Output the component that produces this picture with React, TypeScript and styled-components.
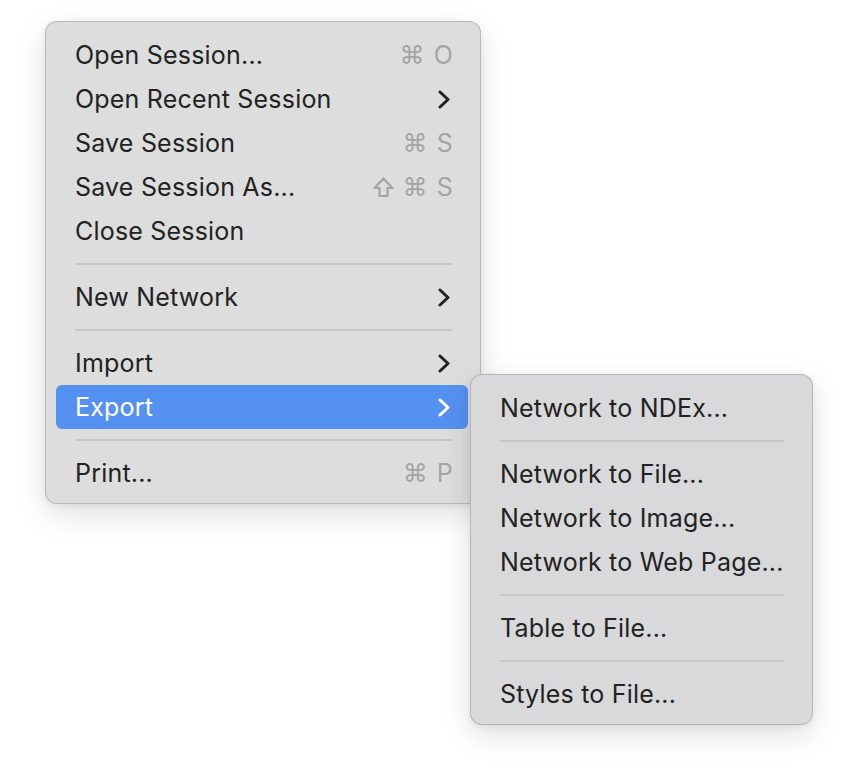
import React from "react";
import styled, { createGlobalStyle } from "styled-components";

const GlobalStyle = createGlobalStyle`
  html, body { margin: 0; padding: 0; background: #ffffff; }
  body { font-family: Inter, "Noto Sans", "DejaVu Sans", sans-serif; -webkit-font-smoothing: antialiased; }
`;

const Page = styled.div`
  padding: 21px 0 0 45px;
  min-height: 770px;
  box-sizing: border-box;
`;

const Menu = styled.div<{ $width: number; $bg: string }>`
  position: relative;
  box-sizing: border-box;
  width: ${(p) => p.$width}px;
  display: flex;
  flex-direction: column;
  padding: 11px 12px 8px 10px;
  background: ${(p) => p.$bg};
  border: 1px solid rgba(0, 0, 0, 0.16);
  border-radius: 12px;
  box-shadow: 0 10px 30px rgba(0, 0, 0, 0.13), 0 2px 6px rgba(0, 0, 0, 0.06);
`;

const Item = styled.div<{ $active?: boolean }>`
  position: relative;
  height: 44px;
  display: flex;
  align-items: center;
  padding: 0 15px 0 19px;
  border-radius: 6px;
  font-size: 25px;
  letter-spacing: 0.2px;
  color: ${(p) => (p.$active ? "#ffffff" : "#222222")};
  background: ${(p) => (p.$active ? "#5591f1" : "transparent")};
`;

const Label = styled.span`
  flex: 1;
  white-space: nowrap;
`;

const Shortcut = styled.span`
  display: flex;
  align-items: center;
  gap: 9px;
  color: #a4a4a4;
`;

const Glyph = styled.span`
  font-family: "DejaVu Sans", sans-serif;
  font-size: 25px;
  line-height: 1;
`;

const Key = styled.span`
  font-size: 25px;
`;

const ChevronIcon = styled.svg`
  width: 12px;
  height: 19px;
  margin-right: 3px;
`;

const Separator = styled.div`
  height: 22px;
  display: flex;
  align-items: center;
  padding: 0 16px 0 19px;
  &::after {
    content: "";
    flex: 1;
    height: 2px;
    background: #c6c6c6;
  }
`;

const SubMenuHolder = styled.div`
  position: absolute;
  left: calc(100% + 2px);
  top: -11px;
`;

const Chevron = ({ color }: { color: string }) => (
  <ChevronIcon viewBox="0 0 12 19">
    <polyline
      points="2,2 10,9.5 2,17"
      fill="none"
      stroke={color}
      strokeWidth="3"
      strokeLinecap="round"
      strokeLinejoin="round"
    />
  </ChevronIcon>
);

const ShiftIcon = styled.svg`
  width: 21px;
  height: 21px;
`;

const Shift = () => (
  <ShiftIcon viewBox="0 0 21 21">
    <path
      d="M10.5 1.5 L19.5 11 H14.5 V19 H6.5 V11 H1.5 Z"
      fill="none"
      stroke="#a4a4a4"
      strokeWidth="2.2"
      strokeLinejoin="round"
    />
  </ShiftIcon>
);

const subItems: (string | null)[] = [
  "Network to NDEx...",
  null,
  "Network to File...",
  "Network to Image...",
  "Network to Web Page...",
  null,
  "Table to File...",
  null,
  "Styles to File...",
];

const SubMenu = () => (
  <Menu $width={343} $bg="#d9d9db">
    {subItems.map((s, i) =>
      s === null ? <Separator key={i} /> : (
        <Item key={i}>
          <Label>{s}</Label>
        </Item>
      )
    )}
  </Menu>
);

export default function App() {
  return (
    <>
      <GlobalStyle />
      <Page>
        <Menu $width={436} $bg="#dddddd">
          <Item>
            <Label>Open Session...</Label>
            <Shortcut>
              <Glyph>⌘</Glyph>
              <Key>O</Key>
            </Shortcut>
          </Item>
          <Item>
            <Label>Open Recent Session</Label>
            <Chevron color="#222222" />
          </Item>
          <Item>
            <Label>Save Session</Label>
            <Shortcut>
              <Glyph>⌘</Glyph>
              <Key>S</Key>
            </Shortcut>
          </Item>
          <Item>
            <Label>Save Session As...</Label>
            <Shortcut>
              <Shift />
              <Glyph>⌘</Glyph>
              <Key>S</Key>
            </Shortcut>
          </Item>
          <Item>
            <Label>Close Session</Label>
          </Item>
          <Separator />
          <Item>
            <Label>New Network</Label>
            <Chevron color="#222222" />
          </Item>
          <Separator />
          <Item>
            <Label>Import</Label>
            <Chevron color="#222222" />
          </Item>
          <Item $active>
            <Label>Export</Label>
            <Chevron color="#ffffff" />
            <SubMenuHolder>
              <SubMenu />
            </SubMenuHolder>
          </Item>
          <Separator />
          <Item>
            <Label>Print...</Label>
            <Shortcut>
              <Glyph>⌘</Glyph>
              <Key>P</Key>
            </Shortcut>
          </Item>
        </Menu>
      </Page>
    </>
  );
}
